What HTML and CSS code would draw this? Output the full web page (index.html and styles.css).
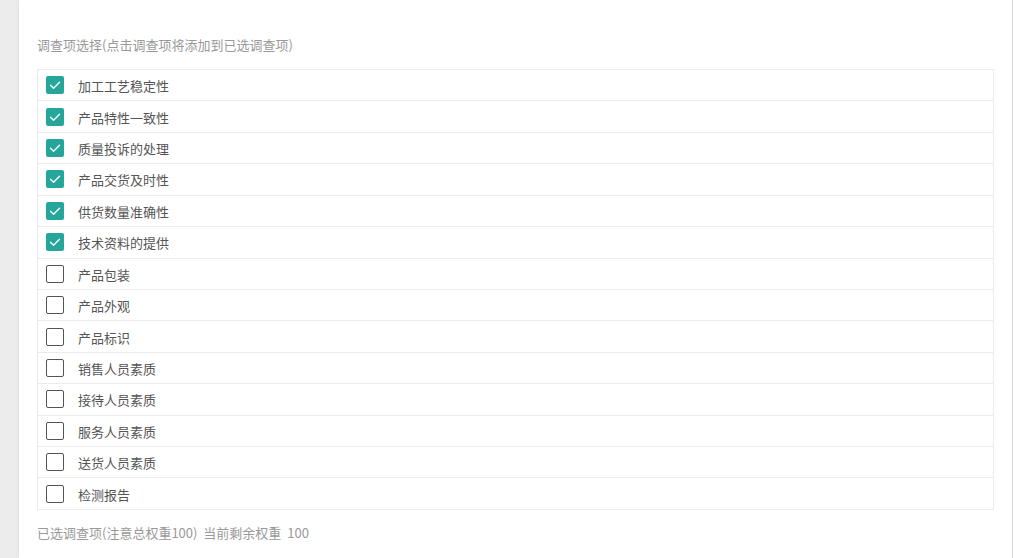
FILE: index.html
```html
<!DOCTYPE html>
<html lang="zh-CN">
<head>
<meta charset="utf-8">
<title>调查项选择</title>
<link rel="stylesheet" href="styles.css">
</head>
<body>
<div class="panel">
  <div class="section-title">调查项选择(点击调查项将添加到已选调查项)</div>
  <div class="list">
    <div class="row"><span class="box checked"><svg viewBox="0 0 18 18"><path d="M4.5 9.2 L7.6 12.2 L13.5 6.2" /></svg></span><span class="label">加工工艺稳定性</span></div>
    <div class="row"><span class="box checked"><svg viewBox="0 0 18 18"><path d="M4.5 9.2 L7.6 12.2 L13.5 6.2" /></svg></span><span class="label">产品特性一致性</span></div>
    <div class="row"><span class="box checked"><svg viewBox="0 0 18 18"><path d="M4.5 9.2 L7.6 12.2 L13.5 6.2" /></svg></span><span class="label">质量投诉的处理</span></div>
    <div class="row"><span class="box checked"><svg viewBox="0 0 18 18"><path d="M4.5 9.2 L7.6 12.2 L13.5 6.2" /></svg></span><span class="label">产品交货及时性</span></div>
    <div class="row"><span class="box checked"><svg viewBox="0 0 18 18"><path d="M4.5 9.2 L7.6 12.2 L13.5 6.2" /></svg></span><span class="label">供货数量准确性</span></div>
    <div class="row"><span class="box checked"><svg viewBox="0 0 18 18"><path d="M4.5 9.2 L7.6 12.2 L13.5 6.2" /></svg></span><span class="label">技术资料的提供</span></div>
    <div class="row"><span class="box"></span><span class="label">产品包装</span></div>
    <div class="row"><span class="box"></span><span class="label">产品外观</span></div>
    <div class="row"><span class="box"></span><span class="label">产品标识</span></div>
    <div class="row"><span class="box"></span><span class="label">销售人员素质</span></div>
    <div class="row"><span class="box"></span><span class="label">接待人员素质</span></div>
    <div class="row"><span class="box"></span><span class="label">服务人员素质</span></div>
    <div class="row"><span class="box"></span><span class="label">送货人员素质</span></div>
    <div class="row"><span class="box"></span><span class="label">检测报告</span></div>
  </div>
  <div class="footer-note">已选调查项(注意总权重100) 当前剩余权重 100</div>
</div>
</body>
</html>
```

FILE: styles.css
```css
html, body {
  margin: 0;
  padding: 0;
  height: 100%;
}
body {
  background: #ececec;
  font-family: "Noto Sans CJK SC", "Noto Sans", sans-serif;
  overflow: hidden;
}
.panel {
  margin-left: 19px;
  width: 994px;
  min-height: 100%;
  box-sizing: border-box;
  background: #fff;
  border-right: 1px solid #d9d9d9;
  box-shadow: -1px 0 3px rgba(0, 0, 0, 0.06);
  padding: 35px 18px 0 18px;
}
.section-title {
  font-size: 13px;
  line-height: 20px;
  color: #999;
  margin-bottom: 14px;
}
.list {
  border: 1px solid #ebebeb;
  display: flex;
  flex-direction: column;
}
.row {
  height: 30.43px;
  display: flex;
  align-items: center;
  padding-left: 8px;
}
.row + .row {
  border-top: 1px solid #ebebeb;
}
.box {
  width: 18px;
  height: 18px;
  box-sizing: border-box;
  border: 1.5px solid #555;
  border-radius: 2px;
  background: #fff;
  flex: none;
  display: flex;
}
.box.checked {
  border: none;
  background: #26a69a;
}
.box svg {
  width: 18px;
  height: 18px;
}
.box svg path {
  fill: none;
  stroke: #fff;
  stroke-width: 1.3;
  stroke-linecap: round;
  stroke-linejoin: round;
}
.label {
  margin-left: 14px;
  padding-top: 2px;
  font-size: 13px;
  color: #555;
  line-height: 20px;
}
.footer-note {
  margin-top: 13px;
  font-size: 13px;
  line-height: 20px;
  word-spacing: 3px;
  color: #999;
}
```
